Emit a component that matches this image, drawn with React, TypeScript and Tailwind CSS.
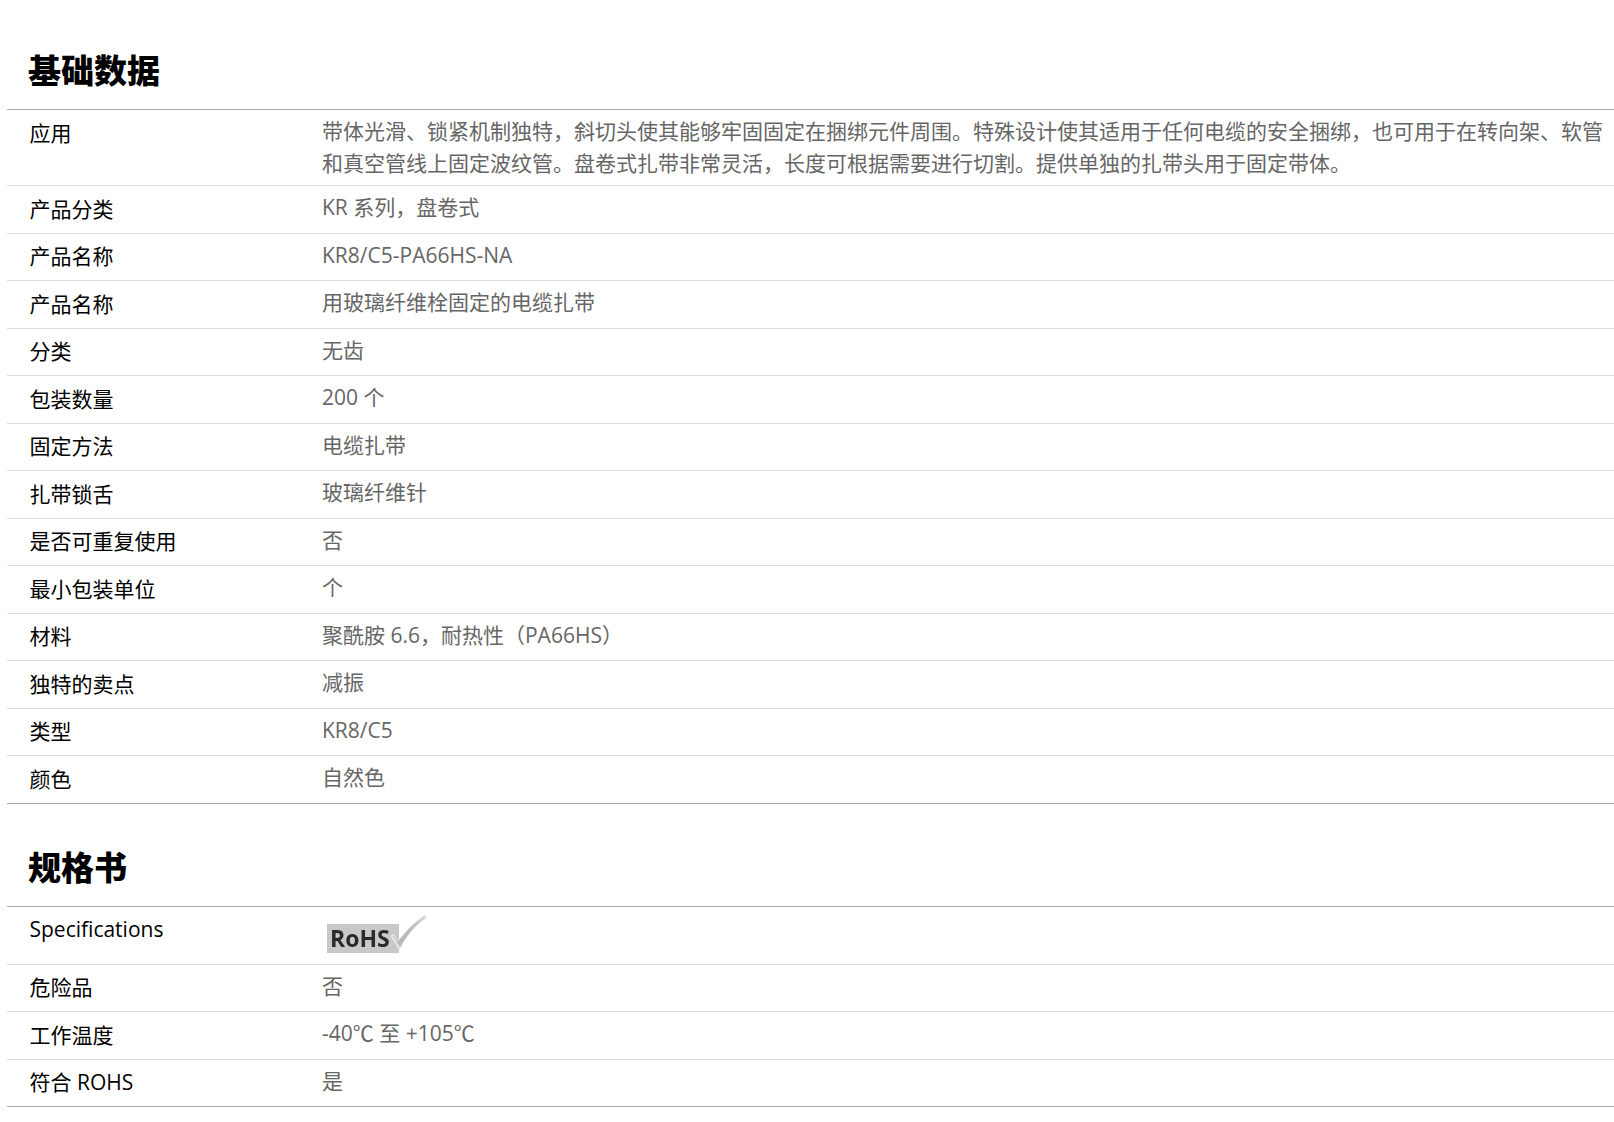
const FONT = "font-['Open_Sans','Noto_Sans_CJK_SC',sans-serif]";

const basic: [string, string][] = [
  ["应用", "带体光滑、锁紧机制独特，斜切头使其能够牢固固定在捆绑元件周围。特殊设计使其适用于任何电缆的安全捆绑，也可用于在转向架、软管和真空管线上固定波纹管。盘卷式扎带非常灵活，长度可根据需要进行切割。提供单独的扎带头用于固定带体。"],
  ["产品分类", "KR 系列，盘卷式"],
  ["产品名称", "KR8/C5-PA66HS-NA"],
  ["产品名称", "用玻璃纤维栓固定的电缆扎带"],
  ["分类", "无齿"],
  ["包装数量", "200 个"],
  ["固定方法", "电缆扎带"],
  ["扎带锁舌", "玻璃纤维针"],
  ["是否可重复使用", "否"],
  ["最小包装单位", "个"],
  ["材料", "聚酰胺 6.6，耐热性（PA66HS）"],
  ["独特的卖点", "减振"],
  ["类型", "KR8/C5"],
  ["颜色", "自然色"],
];

const spec: [string, string][] = [
  ["危险品", "否"],
  ["工作温度", "-40℃ 至 +105℃"],
  ["符合 ROHS", "是"],
];

function Rohs() {
  return (
    <div className="relative ml-[5px] h-[47px] w-[100px] blur-[0.6px]">
      <div className="absolute left-0 top-[11px] flex h-[29px] w-[72px] items-center bg-[#c8c8c8] pl-[3px] text-[23px] font-bold leading-none text-[#2a2a2a]">
        RoHS
      </div>
      <svg className="absolute left-[60px] top-0" width="44" height="38" viewBox="0 0 44 38" fill="none">
        <path d="M5 22 L12 33 C18 21 27 11 39 3" stroke="#e8e8e8" strokeWidth="4" fill="none" />
        <path d="M6 23 L11 29 C18 19 27 10 38 4 C28 12 20 22 13 34 C11 31 9 27 6 23 Z" fill="#b8b8b8" stroke="#c4c4c4" strokeWidth="0.8" />
      </svg>
    </div>
  );
}

function Row({ label, children, last }: { label: string; children: React.ReactNode; last?: boolean }) {
  return (
    <div className={`flex border-b ${last ? "border-[#aaaaaa]" : "border-[#dddddd]"}`}>
      <div className="w-[315px] shrink-0 pb-[7.5px] pl-[22.5px] pt-[7.5px] text-[21px] leading-[31.5px] text-black">{label}</div>
      <div className="min-w-0 flex-1 pb-[6px] pr-[10px] pt-[6px] text-[21px] leading-[31.5px] text-[#666666]">{children}</div>
    </div>
  );
}

function Heading({ children }: { children: string }) {
  return (
    <h2 className="border-b border-[#aaaaaa] pb-[13px] pl-[21px] pt-[3px] text-[33px] font-black leading-[50px] text-black">
      {children}
    </h2>
  );
}

export default function App() {
  return (
    <div className={`${FONT} min-h-[1122px] overflow-hidden bg-white pl-[7px] pt-[43px]`}>
      <Heading>基础数据</Heading>
      {basic.map(([k, v], i) => (
        <Row key={i} label={k} last={i === basic.length - 1}>{v}</Row>
      ))}
      <div className="mt-[36px]">
        <Heading>规格书</Heading>
      </div>
      <div className="flex border-b border-[#dddddd]">
        <div className="w-[315px] shrink-0 pb-[4px] pl-[22.5px] pt-[7.5px] text-[21px] leading-[31.5px] text-black">Specifications</div>
        <div className="flex-1 pb-[4px] pt-[6px]"><Rohs /></div>
      </div>
      {spec.map(([k, v], i) => (
        <Row key={i} label={k} last={i === spec.length - 1}>{v}</Row>
      ))}
    </div>
  );
}
